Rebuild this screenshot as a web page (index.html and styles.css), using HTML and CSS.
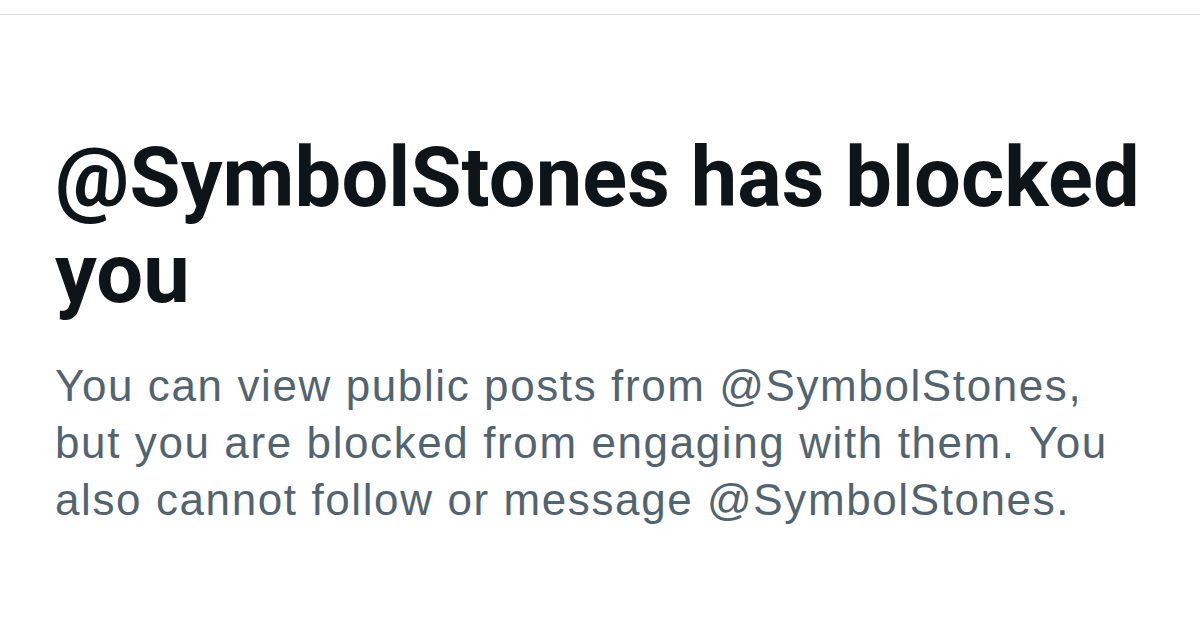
FILE: index.html
```html
<!DOCTYPE html>
<html lang="en">
<head>
    <meta charset="UTF-8">
    <meta name="viewport" content="width=device-width, initial-scale=1.0">
    <title>Blocked</title>
    <link rel="stylesheet" href="styles.css">
</head>
<body>
    <div class="top-bar"></div>
    <div class="empty-state">
        <h1 class="title">@SymbolStones has blocked you</h1>
        <p class="desc">You can view public posts from @SymbolStones, but you are blocked from engaging with them. You also cannot follow or message @SymbolStones.</p>
    </div>
</body>
</html>
```

FILE: styles.css
```css
* {
    margin: 0;
    padding: 0;
    box-sizing: border-box;
}
body {
    background-color: #fff;
}
.top-bar {
    height: 15px;
    border-bottom: 1px solid #dcdcdc;
}
.empty-state {
    padding: 115px 50px 0 55px;
}
.title {
    color: #0f1419;
    font-family: Roboto, "Liberation Sans", sans-serif;
    font-size: 83px;
    font-weight: 700;
    letter-spacing: 0.1px;
    line-height: 96px;
}
.desc {
    margin-top: 35px;
    color: #536471;
    font-family: "Liberation Sans", Arial, sans-serif;
    font-size: 44px;
    letter-spacing: 1.6px;
    line-height: 57px;
}
```
